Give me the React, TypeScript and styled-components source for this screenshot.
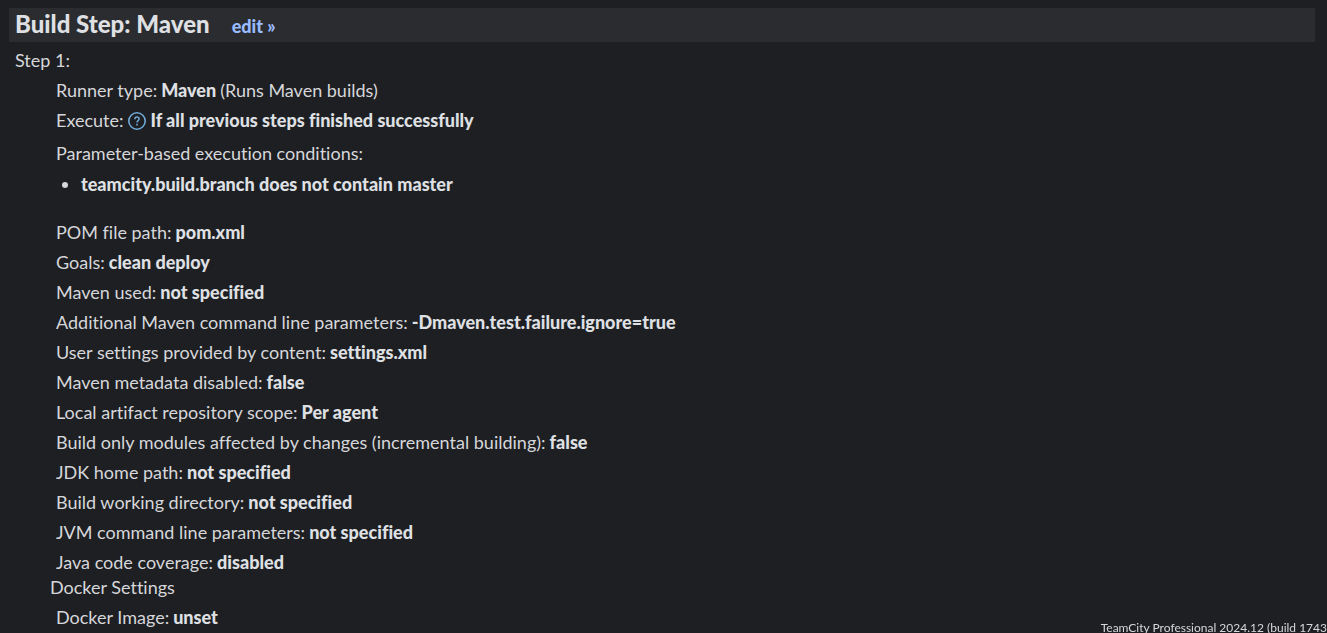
import React from "react";
import styled, { createGlobalStyle } from "styled-components";

const GlobalStyle = createGlobalStyle`
  *, *::before, *::after { box-sizing: border-box; }
  body {
    margin: 0;
    background: #1e1f23;
    color: #d6d7da;
    font-family: "Segoe UI", Lato, "Open Sans", sans-serif;
    font-size: 18px;
    font-variant-ligatures: none;
    line-height: 30px;
    overflow: hidden;
  }
`;

const Page = styled.main`
  padding: 8px 12px 0 9px;
`;

const StepHeader = styled.header`
  display: flex;
  align-items: center;
  gap: 22px;
  height: 34px;
  padding: 0 6px 2px;
  margin-bottom: 3px;
  background: #2b2c30;
`;

const Title = styled.h1`
  margin: 0;
  font-size: 24px;
  font-weight: 900;
  color: #dfe0e3;
`;

const EditLink = styled.a`
  padding-top: 3px;
  color: #99bbff;
  font-weight: 900;
  text-decoration: none;
`;

const StepLabel = styled.div`
  padding-left: 6px;
`;

const Settings = styled.section`
  padding-left: 47px;
`;

const Setting = styled.div`
  display: flex;
  align-items: center;
  gap: 4px;
  white-space: nowrap;
`;

const Value = styled.strong`
  font-weight: 900;
  color: #dfe0e3;
`;

const HelpButton = styled.button`
  display: flex;
  padding: 2px 1px 0 0;
  border: 0;
  background: none;
  color: #6fa8d6;
  cursor: pointer;
`;

const ConditionsTitle = styled.div`
  margin-top: 3px;
`;

const Conditions = styled.ul`
  margin: 1px 0 18px;
  padding-left: 25px;
`;

const GroupTitle = styled.h2`
  margin: 0;
  padding: 0 0 5px 41px;
  font-size: 18px;
  font-weight: 400;
  line-height: 20px;
`;

const Version = styled.footer`
  position: fixed;
  right: 0;
  bottom: -4px;
  font-size: 12px;
  line-height: 18px;
  white-space: nowrap;
`;

const mavenSettings = [
  ["POM file path", "pom.xml"],
  ["Goals", "clean deploy"],
  ["Maven used", "not specified"],
  ["Additional Maven command line parameters", "-Dmaven.test.failure.ignore=true"],
  ["User settings provided by content", "settings.xml"],
  ["Maven metadata disabled", "false"],
  ["Local artifact repository scope", "Per agent"],
  ["Build only modules affected by changes (incremental building)", "false"],
  ["JDK home path", "not specified"],
  ["Build working directory", "not specified"],
  ["JVM command line parameters", "not specified"],
  ["Java code coverage", "disabled"],
];

function HelpIcon() {
  return (
    <svg width="18" height="18" viewBox="0 0 18 18" fill="none" stroke="currentColor" aria-hidden="true">
      <circle cx="9" cy="9" r="8.2" strokeWidth="1.6" />
      <path d="M6.9 7.2c0-1.3.9-2.1 2.1-2.1s2.1.8 2.1 1.9c0 1.6-2.1 1.7-2.1 3.5" strokeWidth="1.5" />
      <path d="M9 11.8v1.6" strokeWidth="1.6" />
    </svg>
  );
}

export default function App() {
  return (
    <>
      <GlobalStyle />
      <Page>
        <StepHeader>
          <Title>Build Step: Maven</Title>
          <EditLink href="#edit">edit »</EditLink>
        </StepHeader>
        <StepLabel>Step 1:</StepLabel>
        <Settings>
          <Setting>
            <span>Runner type:</span>
            <Value>Maven</Value>
            <span>(Runs Maven builds)</span>
          </Setting>
          <Setting>
            <span>Execute:</span>
            <HelpButton type="button" aria-label="Help">
              <HelpIcon />
            </HelpButton>
            <Value>If all previous steps finished successfully</Value>
          </Setting>
          <ConditionsTitle>Parameter-based execution conditions:</ConditionsTitle>
          <Conditions>
            <li>
              <Value>teamcity.build.branch does not contain master</Value>
            </li>
          </Conditions>
          {mavenSettings.map(([label, value]) => (
            <Setting key={label}>
              <span>{label}:</span>
              <Value>{value}</Value>
            </Setting>
          ))}
        </Settings>
        <GroupTitle>Docker Settings</GroupTitle>
        <Settings>
          <Setting>
            <span>Docker Image:</span>
            <Value>unset</Value>
          </Setting>
        </Settings>
      </Page>
      <Version>TeamCity Professional 2024.12 (build 1743</Version>
    </>
  );
}
